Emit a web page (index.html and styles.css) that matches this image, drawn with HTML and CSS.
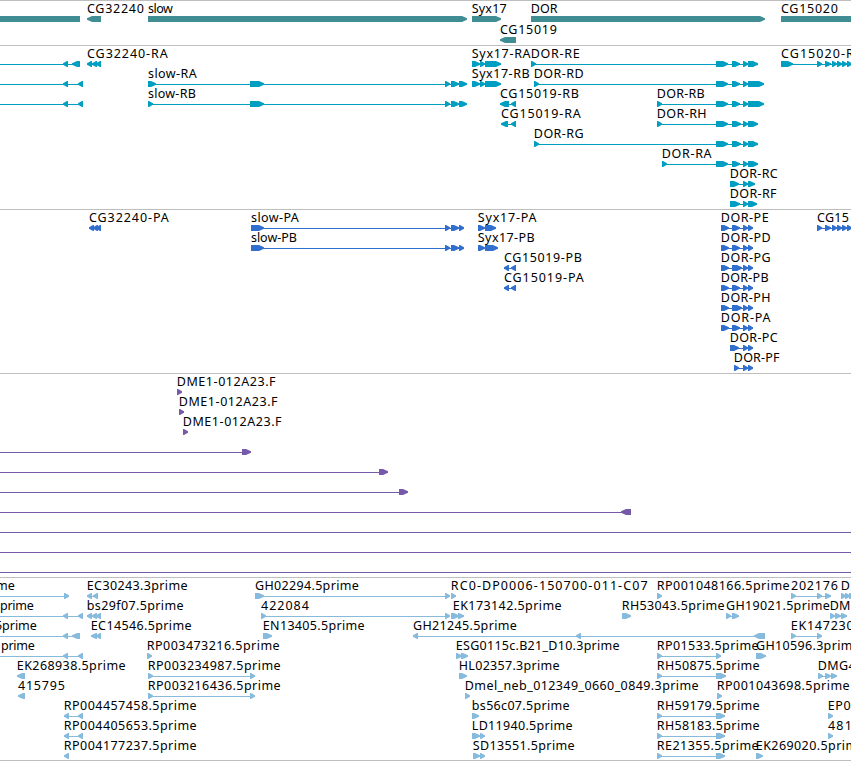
FILE: index.html
```html
<!DOCTYPE html>
<html lang="en">
<head>
  <meta charset="UTF-8" />
  <meta name="viewport" content="width=device-width, initial-scale=1.0" />
  <title>Genome Browser</title>
  <link rel="stylesheet" href="styles.css">
</head>
<body>

<main class="browser">
  <section class="track gene" id="gene"></section>
  <section class="track transcript" id="transcript"></section>
  <section class="track protein" id="protein"></section>
  <section class="track clone" id="clone"></section>
  <section class="track est" id="est"></section>
</main>

<script src="tracks.js"></script>

</body>
</html>
```
FILE: styles.css
```css
* {
  margin: 0;
  padding: 0;
  box-sizing: border-box;
}

body {
  background: #fff;
  overflow: hidden;
}

.browser {
  display: flex;
  flex-direction: column;
  width: 851px;
  border-bottom: 1px solid #bebebe;
}

.track {
  border-top: 1px solid #bebebe;
  overflow: hidden;
}

.track svg {
  display: block;
  width: 100%;
  height: 100%;
}

.track text {
  font-family: "Noto Sans", "Open Sans", sans-serif;
  font-size: 12.5px;
  fill: #000;
}

.track rect {
  shape-rendering: crispEdges;
}

.gene {
  height: 45px;
  fill: #408e94;
}

.transcript {
  height: 164px;
  fill: #009fc1;
}

.protein {
  height: 164px;
  fill: #316fce;
}

.clone {
  height: 204px;
  fill: #7659a9;
}

.est {
  height: 183px;
  fill: #87bbdd;
}
```
FILE: tracks.js
```js
const NS = "http://www.w3.org/2000/svg";

// each feature: [row, strand, blocks, label, label x, label width]
const tracks = {
  gene: [
    [0, "<", "-20-80"],
    [0, "<", "87-101", "CG32240", 87, 58],
    [0, ">", "148-467", "slow", 148, 26],
    [0, ">", "472-501", "Syx17", 471, 36],
    [0, ">", "531-765", "DOR", 530, 28],
    [0, ">", "781-870", "CG15020", 781, 58],
    [1, "<", "500-516", "CG15019", 500, 58]
  ],
  transcript: [
    [0, "<", "-20--10 63-68 72-80"],
    [0, "<", "87-92 92-97 96-101", "CG32240-RA", 87, 82],
    [0, ">", "472-480 480-485 485-501", "Syx17-RA", 471, 60],
    [0, ">", "531-536 716-728 732-740 743-748 748-758", "DOR-RE", 530, 50],
    [0, ">", "781-793 817-822 825-831 832-837 837-842 842-847 847-852", "CG15020-R", 781, 74],
    [1, "<", "-20--10 63-68 78-83"],
    [1, ">", "148-156 250-264 445-450 451-459 459-467", "slow-RA", 148, 50],
    [1, ">", "472-480 480-485 485-501", "Syx17-RB", 471, 59],
    [1, ">", "534-539 716-728 732-740 743-748 748-764", "DOR-RD", 533, 51],
    [2, "<", "-20--10 63-68 78-83"],
    [2, ">", "148-153 250-264 445-450 451-459 459-467", "slow-RB", 148, 49],
    [2, "<", "500-509 511-516", "CG15019-RB", 500, 80],
    [2, ">", "657-662 716-728 732-740 743-748 748-764", "DOR-RB", 656, 49],
    [3, "<", "501-508 511-516", "CG15019-RA", 501, 81],
    [3, ">", "657-662 716-728 732-741 743-748 748-758", "DOR-RH", 656, 51],
    [4, ">", "534-539 716-728 732-741 743-748 748-758", "DOR-RG", 533, 51],
    [5, ">", "662-667 716-728 732-740 743-748 748-758", "DOR-RA", 661, 51],
    [6, ">", "730-739 743-748 748-755", "DOR-RC", 729, 49],
    [7, ">", "730-740 743-748 748-757", "DOR-RF", 729, 48]
  ],
  protein: [
    [0, "<", "89-94 93-98 96-101", "CG32240-PA", 89, 81],
    [0, ">", "251-264 445-450 451-459 459-464", "slow-PA", 251, 49],
    [0, ">", "478-485 485-496", "Syx17-PA", 477, 60],
    [0, ">", "721-729 732-740 743-748 748-753", "DOR-PE", 720, 49],
    [0, ">", "817-822 825-831 832-837 837-842 842-847 847-852", "CG15", 817, 33],
    [1, ">", "251-264 445-450 451-459 459-464", "slow-PB", 251, 47],
    [1, ">", "478-485 485-498", "Syx17-PB", 477, 58],
    [1, ">", "721-729 732-740 743-748 748-753", "DOR-PD", 720, 51],
    [2, "<", "504-509 511-516", "CG15019-PB", 504, 79],
    [2, ">", "721-729 732-742 743-748 748-753", "DOR-PG", 720, 51],
    [3, "<", "504-509 511-516", "CG15019-PA", 504, 81],
    [3, ">", "721-729 732-740 743-748 748-753", "DOR-PB", 720, 49],
    [4, ">", "721-729 732-742 743-748 748-753", "DOR-PH", 720, 51],
    [5, ">", "721-729 732-740 743-748 748-753", "DOR-PA", 720, 51],
    [6, ">", "730-739 743-748 748-753", "DOR-PC", 729, 49],
    [7, ">", "734-739 743-748 748-753", "DOR-PF", 733, 47]
  ],
  clone: [
    [0, ">", "177-182", "DME1-012A23.F", 176, 100],
    [1, ">", "179-184", "DME1-012A23.F", 178, 100],
    [2, ">", "183-188", "DME1-012A23.F", 182, 100],
    [3, ">", "-20--10 242-251"],
    [4, ">", "-20--10 379-388"],
    [5, ">", "-20--10 399-408"],
    [6, "<", "-20--10 621-631"],
    [7, ">", "-20--10 870-880"],
    [8, ">", "-20--10 870-880"],
    [9, ">", "-20--10 870-880"]
  ],
  est: [
    [0, ">", "-20--10 64-69", "me", -4, 20],
    [0, "<", "87-92 93-98", "EC30243.3prime", 86, 102],
    [0, ">", "255-264 445-450", "GH02294.5prime", 255, 105],
    [0, ">", "451-456", "RC0-DP0006-150700-011-C07", 450, 198],
    [0, ">", "657-662", "RP001048166.5prime", 656, 134],
    [0, ">", "791-796 817-822 825-831", "202176", 791, 48],
    [0, ">", "841-846 845-850 849-854", "D", 840, 10],
    [1, "<", "-20--10 63-68 78-83", "prime", 0, 35],
    [1, "<", "87-92 92-97 96-101", "bs29f07.5prime", 86, 98],
    [1, ">", "261-266 445-450", "422084", 261, 49],
    [1, ">", "451-459 458-464", "EK173142.5prime", 452, 110],
    [1, ">", "622-631", "RH53043.5prime", 621, 104],
    [1, ">", "726-731 732-739", "GH19021.5prime", 726, 105],
    [1, ">", "830-835 835-841 841-847", "DMG", 829, 31],
    [2, "<", "-20--10 63-68 72-80", "5prime", -5, 43],
    [2, "<", "91-97 96-101", "EC14546.5prime", 90, 102],
    [2, ">", "263-272", "EN13405.5prime", 262, 103],
    [2, "<", "413-418 576-581 754-765", "GH21245.5prime", 413, 105],
    [2, ">", "791-796 817-822", "EK147230", 790, 64],
    [3, "<", "-20--10 63-68 78-83", "prime", 1, 35],
    [3, ">", "147-152", "RP003473216.5prime", 146, 134],
    [3, ">", "456-462 461-468", "ESG0115c.B21_D10.3prime", 455, 165],
    [3, ">", "657-662 716-721", "RP01533.5prime", 656, 103],
    [3, ">", "756-766", "GH10596.3prime", 756, 105],
    [4, "<", "17-25", "EK268938.5prime", 16, 110],
    [4, ">", "148-153 250-255", "RP003234987.5prime", 147, 134],
    [4, ">", "459-467", "HL02357.3prime", 458, 102],
    [4, ">", "657-662 716-726", "RH50875.5prime", 656, 104],
    [4, ">", "818-823 825-831 831-837", "DMG4", 817, 39],
    [5, "<", "18-25", "415795", 18, 48],
    [5, ">", "148-153 250-255", "RP003216436.5prime", 147, 134],
    [5, ">", "465-470", "Dmel_neb_012349_0660_0849.3prime", 464, 235],
    [5, ">", "717-722", "RP001043698.5prime", 716, 134],
    [6, "<", "64-69 78-83", "RP004457458.5prime", 63, 134],
    [6, ">", "472-479", "bs56c07.5prime", 471, 99],
    [6, ">", "657-662 716-725", "RH59179.5prime", 656, 104],
    [6, ">", "828-833", "EP0", 827, 24],
    [7, "<", "64-69 78-83", "RP004405653.5prime", 63, 134],
    [7, ">", "472-480 480-485", "LD11940.5prime", 471, 102],
    [7, ">", "657-662 716-725", "RH58183.5prime", 656, 104],
    [7, ">", "828-833", "481", 828, 25],
    [8, "<", "64-69", "RP004177237.5prime", 63, 134],
    [8, ">", "473-480 480-485", "SD13551.5prime", 472, 103],
    [8, ">", "657-662 716-725", "RE21355.5prime", 656, 103],
    [8, ">", "756-763", "EK269020.5prime", 755, 110]
  ]
};

function add(parent, name, attrs) {
  const el = document.createElementNS(NS, name);
  for (const key in attrs) el.setAttribute(key, attrs[key]);
  parent.appendChild(el);
  return el;
}

// block with a pointed end on the strand side
function drawBlock(svg, a, b, y, strand) {
  const tip = Math.min(b - a, 6);
  const pts = strand === ">"
    ? [[a, y], [b - tip + 1, y], [b, y + 2.2], [b, y + 3.8], [b - tip + 1, y + 6], [a, y + 6]]
    : [[b, y], [a + tip - 1, y], [a, y + 2.2], [a, y + 3.8], [a + tip - 1, y + 6], [b, y + 6]];
  add(svg, "polygon", { points: pts.map(p => p.join(",")).join(" ") });
}

function drawTrack(id) {
  const svg = add(document.getElementById(id), "svg", {});
  const pitch = id === "gene" ? 21 : 20;

  tracks[id].forEach(([row, strand, blocks, label, x, width]) => {
    const y = row * pitch + 15;
    const ranges = blocks.split(" ").map(s => s.match(/^(-?\d+)-(-?\d+)$/).slice(1).map(Number));
    const start = ranges[0][0];
    const end = ranges[ranges.length - 1][1];

    if (ranges.length > 1) {
      add(svg, "rect", { x: start, y: y + 3, width: end - start, height: 1 });
    }
    ranges.forEach(([a, b]) => drawBlock(svg, a, b, y, strand));

    if (label) {
      const shift = /^[DEHLRSb]/.test(label) ? 0.8 : 0;
      const text = add(svg, "text", { x: x + shift, y: y - 3, textLength: width - 1.2 });
      text.textContent = label;
    }
  });
}

Object.keys(tracks).forEach(drawTrack);
```
